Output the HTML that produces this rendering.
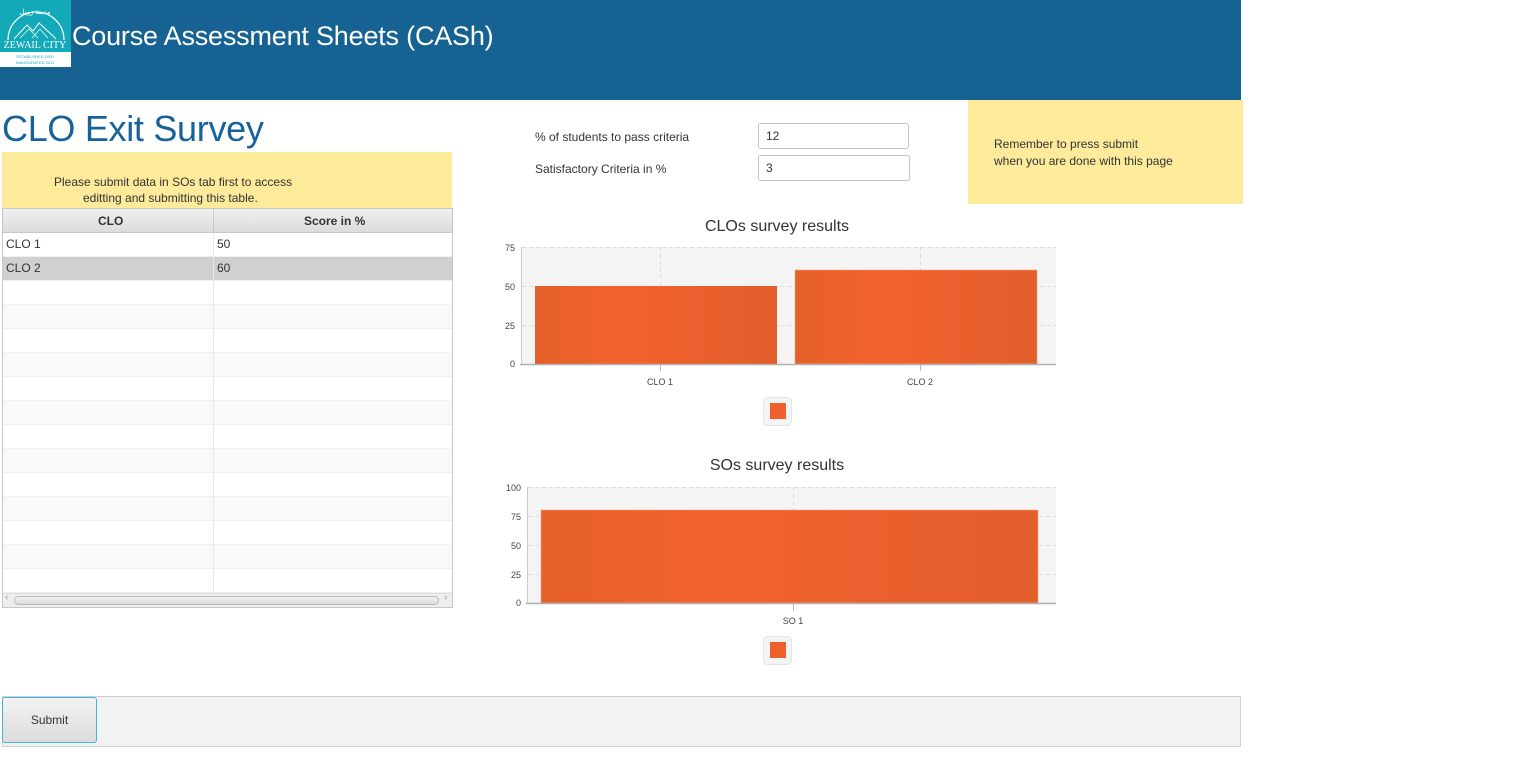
<!DOCTYPE html>
<html><head><meta charset="utf-8"><style>
*{margin:0;padding:0;box-sizing:border-box}
body{width:1537px;height:771px;background:#fff;position:relative;overflow:hidden;font-family:"Liberation Sans",sans-serif;color:#333}
.a{position:absolute}
.hdr{left:0;top:0;width:1241px;height:100px;background:#166393}
.logo{left:0;top:0;width:71px;height:67px;background:#12a9b9}
.ttl{left:72px;top:21px;font-size:27px;color:#fff;white-space:nowrap;letter-spacing:-0.2px}
.h1{left:2px;top:108px;font-size:36px;color:#16629a;white-space:nowrap;letter-spacing:-0.3px}
.note{left:2px;top:152px;width:450px;height:57px;background:#fdea9b;font-size:12px;color:#333}
.tbl{left:2px;top:208px;width:451px;height:400px;border:1px solid #c8c8c8;background:#fff}
.row{position:absolute;left:0;width:449px;height:24px;border-bottom:1px solid #f0f0f0;font-size:12px;line-height:23px}
.row span{position:absolute;top:0}
.vl{position:absolute;left:210px;top:0;width:1px;height:384px;background:#e8e8e8}
.th{position:absolute;left:0;top:0;width:449px;height:24px;background:linear-gradient(#f0f0f0,#dcdcdc);border-bottom:1px solid #c8c8c8;font-size:12px;font-weight:bold;line-height:24px}
.lab{font-size:12px;color:#333}
.inp{width:151px;height:26px;border:1px solid #c4c4c4;border-radius:3px;background:#fff;font-size:12px;line-height:24px;padding-left:7px}
.rem{left:968px;top:100px;width:275px;height:104px;background:#fdea9b;font-size:12px;line-height:17px;padding:36px 0 0 26px}
.foot{left:2px;top:696px;width:1239px;height:51px;background:#f2f2f2;border:1px solid #d0d0d0}
.btn{left:2px;top:697px;width:95px;height:46px;border:1px solid #3fb6e0;border-radius:3px;background:linear-gradient(#f3f3f3,#dcdcdc);font-size:12px;text-align:center;line-height:44px}
</style></head><body>
<div class="a hdr"></div>
<div class="a logo">
<svg width="71" height="67" viewBox="0 0 71 67">
<path d="M8 40 A27 27 0 0 1 64 40" fill="none" stroke="#fff" stroke-width="1.2"/>
<path d="M14 39 L27 25 L33 31 L39 23 L52 35 L56 39" fill="none" stroke="#fff" stroke-width="1"/>
<path d="M20 38 L29 29 L38 38 M32 38 L40 29 L48 38" fill="none" stroke="#fff" stroke-width="0.7"/>
<text x="35" y="14" font-size="7" fill="#fff" text-anchor="middle">مدينة زويل</text>
<text x="35" y="48" font-size="10" fill="#fff" text-anchor="middle" font-family="Liberation Serif">ZEWAIL CITY</text>
<rect x="0" y="52" width="71" height="15" fill="#fff"/>
<text x="35" y="58" font-size="4" fill="#12a9b9" text-anchor="middle">ESTABLISHED 2000</text>
<text x="35" y="64" font-size="4" fill="#12a9b9" text-anchor="middle">INAUGURATED 2011</text>
</svg></div>
<div class="a ttl">Course Assessment Sheets (CASh)</div>
<div class="a h1">CLO Exit Survey</div>
<div class="a note"><div style="position:absolute;left:52px;top:23px">Please submit data in SOs tab first to access</div><div style="position:absolute;left:81px;top:39px">editting and submitting this table.</div></div>
<div class="a tbl">
<div class="th"><span style="position:absolute;left:95px">CLO</span><span style="position:absolute;left:301px">Score in %</span><div style="position:absolute;left:210px;top:0;width:1px;height:24px;background:#c8c8c8"></div></div>
<div class="row" style="top:24px;background:#fff"><span style="left:3px">CLO 1</span><span style="left:214px">50</span></div>
<div class="row" style="top:48px;background:#d0d0d0"><span style="left:3px">CLO 2</span><span style="left:214px">60</span></div>
<div class="row" style="top:72px;background:#fff"></div>
<div class="row" style="top:96px;background:#f9f9f9"></div>
<div class="row" style="top:120px;background:#fff"></div>
<div class="row" style="top:144px;background:#f9f9f9"></div>
<div class="row" style="top:168px;background:#fff"></div>
<div class="row" style="top:192px;background:#f9f9f9"></div>
<div class="row" style="top:216px;background:#fff"></div>
<div class="row" style="top:240px;background:#f9f9f9"></div>
<div class="row" style="top:264px;background:#fff"></div>
<div class="row" style="top:288px;background:#f9f9f9"></div>
<div class="row" style="top:312px;background:#fff"></div>
<div class="row" style="top:336px;background:#f9f9f9"></div>
<div class="row" style="top:360px;background:#fff"></div>
<div class="vl" style="top:24px;height:360px"></div>
<div style="position:absolute;left:0;top:384px;width:449px;height:14px;background:#eee;border-top:1px solid #ddd"></div>
<div style="position:absolute;left:11px;top:387px;width:425px;height:9px;border:1px solid #bbb;border-radius:5px;background:linear-gradient(#f4f4f4,#dadada)"></div>
<div style="position:absolute;left:2px;top:383px;font-size:10px;color:#999">‹</div>
<div style="position:absolute;left:441px;top:383px;font-size:10px;color:#999">›</div>
</div>
<div class="a lab" style="left:535px;top:130px">% of students to pass criteria</div>
<div class="a lab" style="left:535px;top:162px">Satisfactory Criteria in %</div>
<div class="a inp" style="left:758px;top:123px">12</div>
<div class="a inp" style="left:758px;top:155px;width:152px">3</div>
<div class="a rem">Remember to press submit<br>when you are done with this page</div>

<svg class="a" style="left:0;top:0" width="1100" height="680">
<defs><linearGradient id="g" x1="0" x2="1"><stop offset="0" stop-color="#e5602b"/><stop offset=".35" stop-color="#f26230"/><stop offset="1" stop-color="#e25e2b"/></linearGradient></defs>
<g font-family="Liberation Sans,sans-serif" fill="#333">
<text x="777" y="231" font-size="16" text-anchor="middle">CLOs survey results</text>
<rect x="522" y="247" width="534" height="117" fill="#f4f4f4"/>
<g stroke="#ddd" stroke-dasharray="4,3"><line x1="522" y1="247.5" x2="1056" y2="247.5"/><line x1="522" y1="286.5" x2="1056" y2="286.5"/><line x1="522" y1="325.5" x2="1056" y2="325.5"/><line x1="660.5" y1="247" x2="660.5" y2="364"/><line x1="920.5" y1="247" x2="920.5" y2="364"/></g>
<rect x="535" y="286" width="242" height="78" fill="url(#g)"/>
<rect x="795" y="270" width="242" height="94" fill="url(#g)" stroke="#f5a080" stroke-width=".6"/>
<line x1="520" y1="364.5" x2="1056" y2="364.5" stroke="#b0b0b0" stroke-width="1.5"/>
<line x1="521.5" y1="247" x2="521.5" y2="364" stroke="#ccc"/>
<g font-size="9" fill="#444" text-anchor="end"><text x="515" y="251">75</text><text x="515" y="290">50</text><text x="515" y="329">25</text><text x="515" y="367">0</text></g>
<g font-size="9" fill="#444" text-anchor="middle"><text x="660" y="385">CLO 1</text><text x="920" y="385">CLO 2</text></g>
<line x1="660.5" y1="365" x2="660.5" y2="371" stroke="#bbb"/><line x1="920.5" y1="365" x2="920.5" y2="371" stroke="#bbb"/>
<rect x="763.5" y="397.5" width="28" height="28" rx="4" fill="#f4f4f4" stroke="#e4e4e4"/>
<rect x="770" y="403" width="16" height="16" fill="#ee5f2c"/>

<text x="777" y="470" font-size="16" text-anchor="middle">SOs survey results</text>
<rect x="528" y="487" width="528" height="116" fill="#f4f4f4"/>
<g stroke="#ddd" stroke-dasharray="4,3"><line x1="528" y1="487.5" x2="1056" y2="487.5"/><line x1="528" y1="516.5" x2="1056" y2="516.5"/><line x1="528" y1="545.5" x2="1056" y2="545.5"/><line x1="528" y1="574.5" x2="1056" y2="574.5"/><line x1="793.5" y1="487" x2="793.5" y2="603"/></g>
<rect x="541" y="510" width="497" height="93" fill="url(#g)" stroke="#f5a080" stroke-width=".6"/>
<line x1="526" y1="603.5" x2="1056" y2="603.5" stroke="#b0b0b0" stroke-width="1.5"/>
<line x1="527.5" y1="487" x2="527.5" y2="603" stroke="#ccc"/>
<g font-size="9" fill="#444" text-anchor="end"><text x="521" y="491">100</text><text x="521" y="520">75</text><text x="521" y="549">50</text><text x="521" y="578">25</text><text x="521" y="606">0</text></g>
<text x="793" y="624" font-size="9" fill="#444" text-anchor="middle">SO 1</text>
<line x1="793.5" y1="604" x2="793.5" y2="611" stroke="#bbb"/>
<rect x="763.5" y="636.5" width="28" height="28" rx="4" fill="#f4f4f4" stroke="#e4e4e4"/>
<rect x="770" y="642" width="16" height="16" fill="#ee5f2c"/>
</g></svg>

<div class="a foot"></div>
<div class="a btn">Submit</div>
</body></html>
